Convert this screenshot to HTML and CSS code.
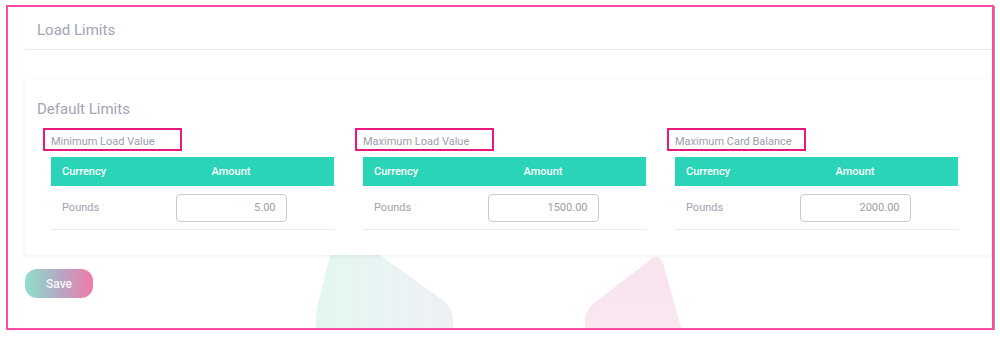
FILE: index.html
```html
<!DOCTYPE html>
<html lang="en">
<head>
    <meta charset="UTF-8">
    <meta name="viewport" content="width=device-width, initial-scale=1.0">
    <title>Load Limits</title>
    <link rel="stylesheet" href="styles.css">
</head>
<body>

    <div class="frame">
        <svg class="decor" width="984" height="322" viewBox="0 0 984 322">
            <defs>
                <linearGradient id="tealFade" x1="0" y1="0" x2="1" y2="0">
                    <stop offset="0" stop-color="#e2f7f2"/>
                    <stop offset="1" stop-color="#eff0f4"/>
                </linearGradient>
                <linearGradient id="pinkFade" x1="0" y1="0" x2="0" y2="1">
                    <stop offset="0" stop-color="#f8e3ee"/>
                    <stop offset="1" stop-color="#f9e8f1"/>
                </linearGradient>
            </defs>
            <g transform="translate(-8,-7)">
                <path d="M335 235 L352 235 L444 301 Q453 308 453 320 L453 345 L316 345 L316 322 Q315 315 317 308 Z" fill="url(#tealFade)"/>
                <path d="M650 260 Q657 253 663 263 L686 345 L585 345 L585 322 Q585 311 593 304 Z" fill="url(#pinkFade)"/>
            </g>
        </svg>

        <div class="page-header">
            <h1>Load Limits</h1>
        </div>

        <div class="limits-card">
            <h2>Default Limits</h2>
            <div class="limits-row">
                <div class="limit-col">
                    <div class="limit-label">Minimum Load Value</div>
                    <table class="limit-table">
                        <thead>
                            <tr><th class="cur">Currency</th><th class="amt">Amount</th></tr>
                        </thead>
                        <tbody>
                            <tr><td class="cur">Pounds</td><td class="amt"><input type="text" value="5.00"></td></tr>
                        </tbody>
                    </table>
                </div>
                <div class="limit-col">
                    <div class="limit-label">Maximum Load Value</div>
                    <table class="limit-table">
                        <thead>
                            <tr><th class="cur">Currency</th><th class="amt">Amount</th></tr>
                        </thead>
                        <tbody>
                            <tr><td class="cur">Pounds</td><td class="amt"><input type="text" value="1500.00"></td></tr>
                        </tbody>
                    </table>
                </div>
                <div class="limit-col">
                    <div class="limit-label">Maximum Card Balance</div>
                    <table class="limit-table">
                        <thead>
                            <tr><th class="cur">Currency</th><th class="amt">Amount</th></tr>
                        </thead>
                        <tbody>
                            <tr><td class="cur">Pounds</td><td class="amt"><input type="text" value="2000.00"></td></tr>
                        </tbody>
                    </table>
                </div>
            </div>
        </div>

        <button class="save-btn" type="button">Save</button>
    </div>

</body>
</html>
```

FILE: styles.css
```css
body {
    margin: 0;
    font-family: Roboto, 'Liberation Sans', sans-serif;
    background: #fff;
}

.frame {
    position: relative;
    margin: 5px 0 0 6px;
    width: 984px;
    height: 321px;
    border: 2px solid #ff4aa6;
    box-shadow: 1px 1px 0 #9a9a9a;
    overflow: hidden;
    background: #fff;
}

.decor {
    position: absolute;
    top: 0;
    left: 0;
    z-index: 0;
}

.page-header {
    position: relative;
    margin-left: 17px;
    height: 43px;
    border-bottom: 1px solid #ececef;
    display: flex;
    align-items: center;
    padding: 3px 0 0 12px;
    box-sizing: border-box;
}

h1 {
    margin: 0;
    font-size: 15px;
    font-weight: 400;
    color: #a2a5b3;
}

.limits-card {
    position: relative;
    z-index: 1;
    margin: 29px 1px 0 17px;
    background: #fff;
    padding: 21px 12px 25px;
    box-shadow: 0 1px 4px rgba(0, 0, 0, 0.07);
    border-radius: 2px;
}

h2 {
    margin: 0 0 10px;
    font-size: 15px;
    line-height: 18px;
    font-weight: 400;
    color: #a2a5b3;
}

.limits-row {
    display: grid;
    grid-template-columns: 292px 292px 292px;
    gap: 20px;
    padding-left: 6px;
}

.limit-label {
    box-sizing: border-box;
    width: 139px;
    height: 23px;
    border: 2px solid #e8197f;
    padding: 2px 0 0 6px;
    font-size: 11px;
    line-height: 19px;
    color: #9b9eab;
    margin-bottom: 6px;
}

.limit-table {
    margin-left: 8px;
    width: 283px;
    border-collapse: collapse;
    font-size: 11px;
}

.limit-table th {
    background: #2ad4b7;
    color: #fff;
    font-weight: 500;
    height: 29px;
    padding: 0;
}

.limit-table th.cur, .limit-table td.cur {
    width: 66px;
    padding-left: 11px;
    text-align: left;
}

.limit-table th.amt, .limit-table td.amt {
    text-align: center;
}

.limit-table td {
    height: 43px;
    padding: 0;
    color: #a0a3ae;
    border-bottom: 1px solid #e9eaee;
}

.limit-table input {
    box-sizing: border-box;
    width: 111px;
    height: 28px;
    border: 1px solid #c9cbd0;
    border-radius: 4px;
    text-align: right;
    padding: 0 10px;
    font-family: Roboto, 'Liberation Sans', sans-serif;
    font-size: 11px;
    color: #9c9ea8;
    vertical-align: middle;
}

.save-btn {
    position: relative;
    z-index: 1;
    display: block;
    margin: 14px 0 0 17px;
    width: 68px;
    height: 29px;
    border: none;
    border-radius: 12px;
    background: linear-gradient(to right, #8fe0c9, #b3a9c5 50%, #f27aa7);
    color: rgba(255, 255, 255, 0.92);
    font-family: Roboto, 'Liberation Sans', sans-serif;
    font-size: 12px;
    font-weight: 500;
    cursor: pointer;
}
```
